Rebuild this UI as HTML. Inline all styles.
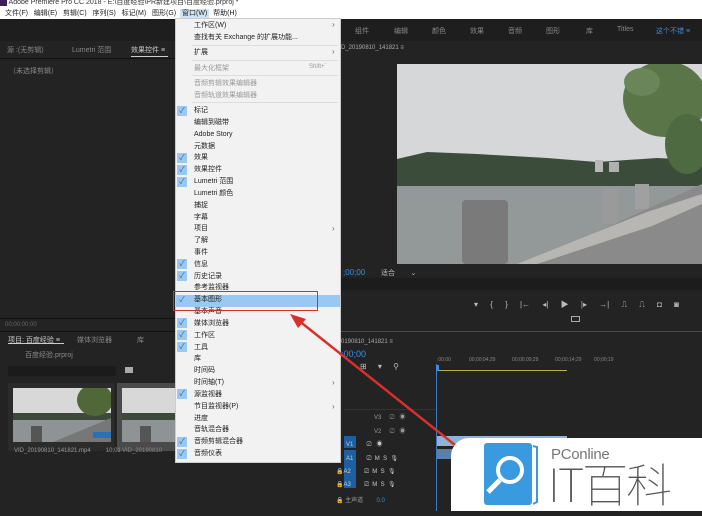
<!DOCTYPE html>
<html><head><meta charset="utf-8"><style>
*{margin:0;padding:0;box-sizing:border-box}
body{width:702px;height:511px;overflow:hidden;background:#232323;position:relative;font-family:"Liberation Sans","Noto Sans CJK SC",sans-serif;font-size:7px;color:#9a9a9a}
.a{position:absolute;white-space:nowrap}
.mi{position:absolute;left:194px;font-size:7px;line-height:9px;height:9px;color:#222}
.ck{position:absolute;left:177px;width:10px;height:10px;background:#9bc8f0;color:#2a6fb8;font-size:8px;line-height:10px;text-align:center}
.dis{color:#999}
.sep{position:absolute;left:192px;width:146px;height:1px;background:#ddd}
.ar{position:absolute;left:332px;font-size:8px;color:#666}
</style></head><body>
<div class="a" style="left:0;top:0;width:702px;height:8px;background:#fff;font-size:7px;color:#333;line-height:6px;overflow:hidden"><span style="display:inline-block;width:7px;height:6px;background:#3a1f5c;vertical-align:top"></span> Adobe Premiere Pro CC 2018 - E:\百度经验\PR新建项目\百度经验.prproj *</div>
<div class="a" style="left:0;top:8px;width:702px;height:11px;background:#fff;color:#222;font-size:7px;line-height:11px;padding-left:5px">文件(F)&nbsp;&nbsp; 编辑(E)&nbsp;&nbsp; 剪辑(C)&nbsp;&nbsp; 序列(S)&nbsp;&nbsp; 标记(M)&nbsp;&nbsp; 图形(G)&nbsp;&nbsp;<span style="background:#cce4f7;padding:1px 2px">窗口(W)</span>&nbsp; 帮助(H)</div>
<div class="a" style="left:0;top:19px;width:702px;height:22px;background:#1e1e1e"></div>
<div class="a" style="left:355px;top:26px;color:#888">组件</div>
<div class="a" style="left:394px;top:26px;color:#888">编辑</div>
<div class="a" style="left:432px;top:26px;color:#888">颜色</div>
<div class="a" style="left:470px;top:26px;color:#888">效果</div>
<div class="a" style="left:508px;top:26px;color:#888">音频</div>
<div class="a" style="left:546px;top:26px;color:#888">图形</div>
<div class="a" style="left:586px;top:26px;color:#888">库</div>
<div class="a" style="left:617px;top:26px;color:#888">Titles</div>
<div class="a" style="left:656px;top:26px;color:#3b8fe0">这个不错 ≡</div>
<div class="a" style="left:7px;top:45px;color:#888">源 :(无剪辑)</div>
<div class="a" style="left:72px;top:45px;color:#888">Lumetri 范围</div>
<div class="a" style="left:131px;top:45px;color:#ccc">效果控件 ≡</div>
<div class="a" style="left:131px;top:56px;width:37px;height:1px;background:#ccc"></div>
<div class="a" style="left:0;top:58px;width:175px;height:1px;background:#111"></div>
<div class="a" style="left:9px;top:66px;color:#888">（未选择剪辑）</div>
<div class="a" style="left:0;top:318px;width:175px;height:1px;background:#111"></div>
<div class="a" style="left:5px;top:322px;color:#666;font-size:6px">00;00;00;00</div>
<div class="a" style="left:0;top:331px;width:175px;height:1px;background:#111"></div>
<div class="a" style="left:8px;top:335px;color:#ccc">项目: 百度经验 ≡</div>
<div class="a" style="left:8px;top:343px;width:56px;height:1px;background:#ccc"></div>
<div class="a" style="left:77px;top:335px;color:#888">媒体浏览器</div>
<div class="a" style="left:137px;top:335px;color:#888">库</div>
<div class="a" style="left:25px;top:350px;color:#888">百度经验.prproj</div>
<div class="a" style="left:8px;top:366px;width:108px;height:10px;background:#1b1b1b"></div>
<div class="a" style="left:125px;top:367px;width:8px;height:6px;background:#aaa"></div>
<div class="a" style="left:8px;top:383px;width:106px;height:68px;background:#2b2b2b"></div>
<div class="a" style="left:117px;top:383px;width:60px;height:68px;background:#4a4a4a"></div>
<svg class="a" style="left:13px;top:388px" width="98" height="54"><rect width="98" height="54" fill="#d8d8d8"/><rect y="25" width="98" height="7" fill="#3d4a3a"/><rect y="32" width="98" height="22" fill="#8e9496"/><rect x="18" y="38" width="11" height="16" fill="#555"/><polygon points="40,54 98,30 98,54" fill="#777"/><ellipse cx="82" cy="12" rx="18" ry="16" fill="#506838"/><rect x="80" y="44" width="18" height="6" fill="#2a6fb8"/></svg>
<svg class="a" style="left:122px;top:388px" width="55" height="54"><rect width="55" height="54" fill="#d8d8d8"/><rect y="25" width="55" height="7" fill="#3d4a3a"/><rect y="32" width="55" height="22" fill="#8e9496"/><rect x="18" y="38" width="11" height="16" fill="#555"/></svg>
<div class="a" style="left:14px;top:448px;color:#999;font-size:6px">VID_20190810_141821.mp4&nbsp;&nbsp;&nbsp;&nbsp;&nbsp;&nbsp;&nbsp;&nbsp;&nbsp;10;01</div>
<div class="a" style="left:122px;top:448px;color:#888;font-size:6px">VID_20190810</div>
<div class="a" style="left:341px;top:45px;color:#aaa;font-size:6px">D_20190810_141821 ≡</div>
<svg class="a" style="left:397px;top:64px" width="305" height="200"><rect width="305" height="200" fill="#d6d7d9"/><polygon points="0,95 30,88 80,90 150,94 200,98 260,94 305,96 305,122 0,124" fill="#3c4c3a"/><rect x="198" y="96" width="8" height="12" fill="#b8b8b8"/><rect x="212" y="98" width="10" height="10" fill="#b0b0b0"/><rect y="122" width="305" height="78" fill="#939899"/><rect x="65" y="136" width="46" height="64" fill="#7a7a7a" rx="4"/><rect x="205" y="125" width="16" height="35" fill="#9a9a9a"/><rect x="238" y="120" width="14" height="25" fill="#a0a0a0"/><polygon points="130,200 305,120 305,200" fill="#8a8a8a"/><polygon points="120,200 250,148 305,130 305,140 255,162 140,200" fill="#b8b6b2"/><ellipse cx="268" cy="35" rx="42" ry="38" fill="#5a7648"/><ellipse cx="290" cy="80" rx="22" ry="30" fill="#4e6a40"/><ellipse cx="245" cy="18" rx="18" ry="14" fill="#6a8658"/></svg>
<div class="a" style="left:343px;top:268px;color:#3b8fe0;font-size:8px">;00;00</div>
<div class="a" style="left:381px;top:268px;color:#bbb">适合&nbsp;&nbsp;&nbsp;&nbsp;&nbsp;&nbsp;&nbsp;&nbsp;⌄</div>
<div class="a" style="left:341px;top:278px;width:361px;height:12px;background:#1c1c1c"></div>
<div class="a" style="left:474px;top:299px;color:#bbb;font-size:8px;word-spacing:10px">▾ { } |← ◂| ▶ |▸ →| ⎍ ⎍ ◘ ◙</div>
<div class="a" style="left:571px;top:316px;width:9px;height:6px;border:1px solid #aaa"></div>
<div class="a" style="left:341px;top:331px;width:361px;height:1px;background:#2d4f70"></div>
<div class="a" style="left:341px;top:339px;color:#aaa;font-size:6px">0190810_141821 ≡</div>
<div class="a" style="left:341px;top:349px;color:#3b8fe0;font-size:9px">:00;00</div>
<div class="a" style="left:360px;top:362px;color:#bbb;font-size:8px;word-spacing:9px">⊞ ▾ ⚲</div>
<div class="a" style="left:437px;top:357px;color:#888;font-size:5px">;00;00&nbsp;&nbsp;&nbsp;&nbsp;&nbsp;&nbsp;&nbsp;&nbsp;&nbsp;&nbsp;&nbsp;&nbsp;&nbsp;00;00;04;29&nbsp;&nbsp;&nbsp;&nbsp;&nbsp;&nbsp;&nbsp;&nbsp;&nbsp;&nbsp;&nbsp;&nbsp;00;00;09;29&nbsp;&nbsp;&nbsp;&nbsp;&nbsp;&nbsp;&nbsp;&nbsp;&nbsp;&nbsp;&nbsp;&nbsp;00;00;14;29&nbsp;&nbsp;&nbsp;&nbsp;&nbsp;&nbsp;&nbsp;&nbsp;&nbsp;00;00;19</div>
<div class="a" style="left:437px;top:370px;width:130px;height:1px;background:#b8b040"></div>
<div class="a" style="left:436px;top:364px;width:1px;height:147px;background:#3b7cc4"></div>
<div class="a" style="left:436px;top:365px;width:3px;height:6px;background:#3b8fe0"></div>
<div class="a" style="left:344px;top:409px;width:92px;height:1px;background:#333"></div>
<div class="a" style="left:374px;top:412px;color:#999;font-size:6px">V3&nbsp;&nbsp;&nbsp;&nbsp;&nbsp;⎚&nbsp;&nbsp;&nbsp;◉</div>
<div class="a" style="left:374px;top:426px;color:#999;font-size:6px">V2&nbsp;&nbsp;&nbsp;&nbsp;&nbsp;⎚&nbsp;&nbsp;&nbsp;◉</div>
<div class="a" style="left:344px;top:436px;width:12px;height:12px;background:#1d5fa0"></div>
<div class="a" style="left:346px;top:439px;color:#ccc;font-size:6px">V1&nbsp;&nbsp;&nbsp;&nbsp;&nbsp;&nbsp;&nbsp;&nbsp;⎚&nbsp;&nbsp;&nbsp;◉</div>
<div class="a" style="left:344px;top:450px;width:12px;height:38px;background:#1d5fa0"></div>
<div class="a" style="left:346px;top:455px;color:#ccc;font-size:6px">A1&nbsp;&nbsp;&nbsp;&nbsp;&nbsp;&nbsp;&nbsp;&nbsp;⎚&nbsp;&nbsp;M&nbsp;&nbsp;S&nbsp;&nbsp;🎙</div>
<div class="a" style="left:336px;top:468px;color:#ccc;font-size:6px">🔒A2&nbsp;&nbsp;&nbsp;&nbsp;&nbsp;&nbsp;&nbsp;&nbsp;⎚&nbsp;&nbsp;M&nbsp;&nbsp;S&nbsp;&nbsp;🎙</div>
<div class="a" style="left:336px;top:481px;color:#ccc;font-size:6px">🔒A3&nbsp;&nbsp;&nbsp;&nbsp;&nbsp;&nbsp;&nbsp;&nbsp;⎚&nbsp;&nbsp;M&nbsp;&nbsp;S&nbsp;&nbsp;🎙</div>
<div class="a" style="left:336px;top:495px;color:#999;font-size:6px">🔒 主声道&nbsp;&nbsp;&nbsp;&nbsp;&nbsp;&nbsp;&nbsp;&nbsp;<span style="color:#3b8fe0">0.0</span></div>
<div class="a" style="left:437px;top:436px;width:130px;height:10px;background:#8fb4d8"></div>
<div class="a" style="left:437px;top:449px;width:20px;height:10px;background:#5a7fa8"></div>
<div class="a" style="left:175px;top:18px;width:166px;height:445px;background:#f2f2f2;border:1px solid #ccc"></div>
<div class="mi" style="top:21px">工作区(W)</div><div class="ar" style="top:20px">›</div>
<div class="mi" style="top:33px">查找有关 Exchange 的扩展功能...</div>
<div class="sep" style="top:45px"></div>
<div class="mi" style="top:48px">扩展</div><div class="ar" style="top:47px">›</div>
<div class="sep" style="top:60px"></div>
<div class="mi dis" style="top:64px">最大化框架</div><div class="a" style="left:309px;top:64px;color:#999;font-size:6px">Shift+`</div>
<div class="sep" style="top:75px"></div>
<div class="mi dis" style="top:79px">音频剪辑效果编辑器</div>
<div class="mi dis" style="top:91px">音频轨道效果编辑器</div>
<div class="sep" style="top:102px"></div>
<div class="a" style="left:176px;top:295px;width:164px;height:12px;background:#99c9f2"></div>
<div id="items"></div>
<div class="a" style="left:173px;top:291px;width:145px;height:20px;border:1.5px solid #d6302a"></div>
<div class="ar" style="top:224px">›</div>
<div class="ar" style="top:378px">›</div>
<div class="ar" style="top:402px">›</div>
<svg class="a" style="left:280px;top:310px" width="180" height="140"><line x1="175" y1="135" x2="18" y2="10" stroke="#d8302a" stroke-width="2.5"/><polygon points="10,4 26,9 18,18" fill="#d8302a"/></svg>
<div class="a" style="left:451px;top:438px;width:251px;height:73px;background:#fff;border-top-left-radius:18px"></div>
<svg class="a" style="left:482px;top:442px" width="58" height="64"><rect x="2" y="1" width="48" height="62" rx="3" fill="#3a9ae0"/><path d="M51 4 L55 5 L55 60 L51 62" stroke="#3a9ae0" stroke-width="2" fill="none"/><circle cx="28" cy="28" r="12" fill="none" stroke="#fff" stroke-width="4"/><line x1="18" y1="38" x2="6" y2="50" stroke="#fff" stroke-width="5"/></svg>
<div class="a" style="left:551px;top:446px;font-size:15px;color:#777;letter-spacing:-0.3px">PConline</div>
<div class="a" style="left:548px;top:456px;font-family:'Noto Sans CJK SC',sans-serif;font-size:46px;line-height:54px;color:#555;font-weight:100;letter-spacing:-2px">IT百科</div>
<script>
var L=[["标记",1],["编辑到磁带",0],["Adobe Story",0],["元数据",0],["效果",1],["效果控件",1],["Lumetri 范围",1],["Lumetri 颜色",0],["捕捉",0],["字幕",0],["项目",0],["了解",0],["事件",0],["信息",1],["历史记录",1],["参考监视器",0],["基本图形",1],["基本声音",0],["媒体浏览器",1],["工作区",1],["工具",1],["库",0],["时间码",0],["时间轴(T)",0],["源监视器",1],["节目监视器(P)",0],["进度",0],["音轨混合器",0],["音频剪辑混合器",1],["音频仪表",1]];
var h="";for(var i=0;i<L.length;i++){var y=106+i*11.83;h+='<div class="mi" style="top:'+y.toFixed(1)+'px">'+L[i][0]+'</div>';if(L[i][1])h+='<div class="ck" style="top:'+(y-0.5).toFixed(1)+'px">✓</div>';}
document.getElementById("items").innerHTML=h;
</script>
</body></html>
